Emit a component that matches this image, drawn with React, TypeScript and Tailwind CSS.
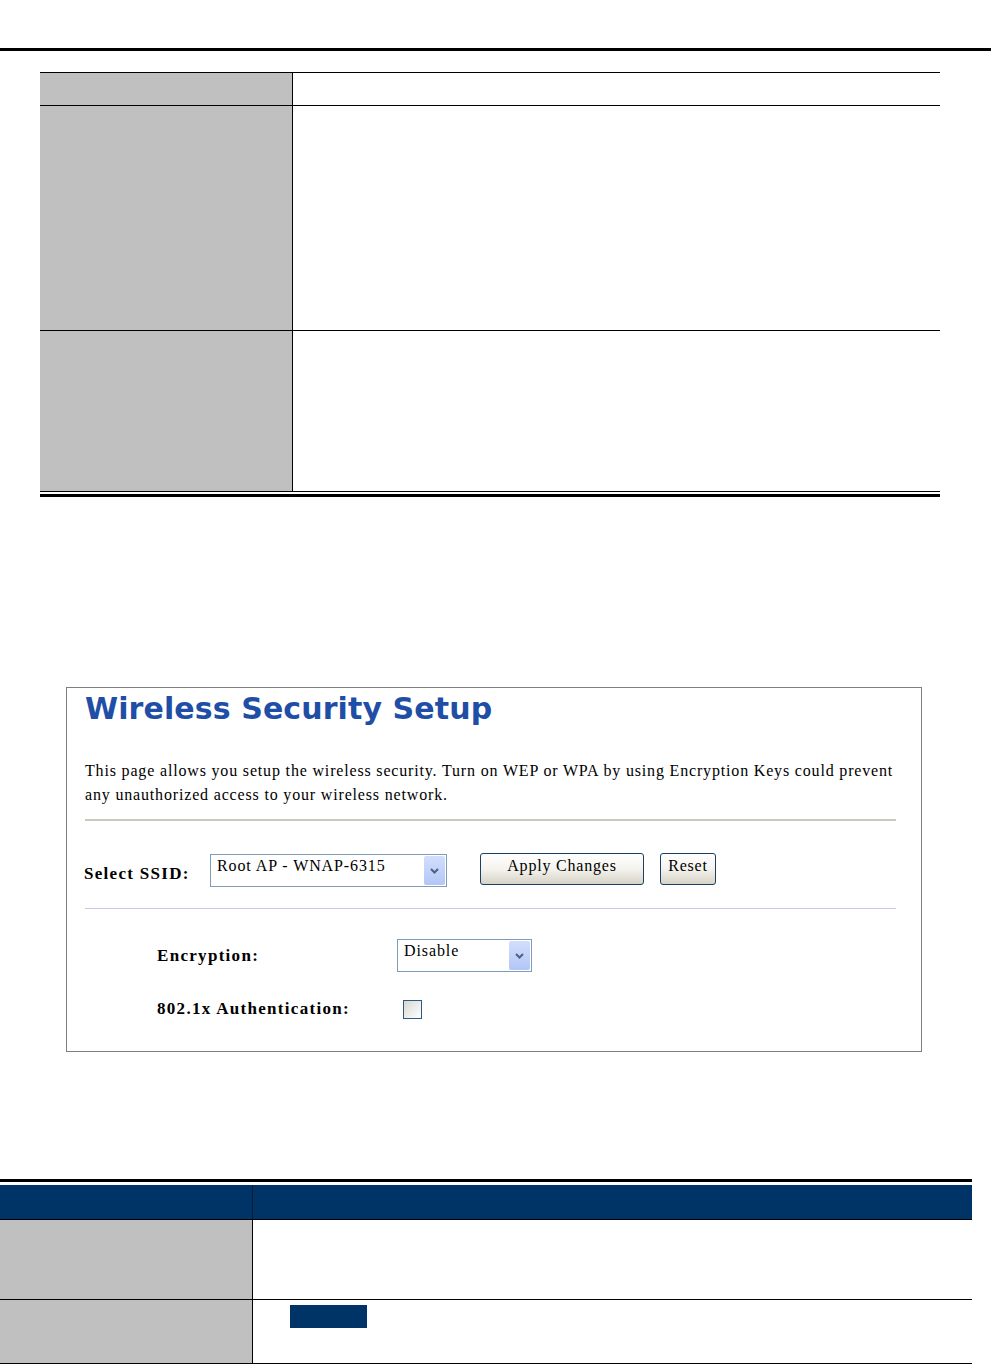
import React from 'react';

const serif = { fontFamily: '"Liberation Serif", "Times New Roman", serif' };

// grey label column + white description column, used by both manual tables
const Row: React.FC<{ h: string; w: string; line?: boolean }> = ({ h, w, line = true }) => (
  <div className={`flex ${h}`}>
    <div className={`${w} shrink-0 bg-[#c0c0c0]`} />
    {line && <div className="w-px bg-black" />}
    <div className="flex-1 bg-white" />
  </div>
);

const SelectArrow: React.FC = () => (
  <div className="w-[21px] self-stretch m-px rounded-[2px] bg-gradient-to-b from-[#d3defc] to-[#b2c6f6] flex items-center justify-center">
    <svg width="9" height="6" viewBox="0 0 9 6">
      <path d="M1 1 L4.5 4.5 L8 1" fill="none" stroke="#4d6185" strokeWidth="2" />
    </svg>
  </div>
);

const Select: React.FC<{ value: string; w: string }> = ({ value, w }) => (
  <div className={`${w} h-[33px] border border-[#7f9db9] bg-white flex`}>
    <span className="flex-1 pl-[6px] pt-px text-[16px] leading-[20px] tracking-[0.9px] text-black whitespace-nowrap">
      {value}
    </span>
    <SelectArrow />
  </div>
);

const XpButton: React.FC<{ label: string; w: string }> = ({ label, w }) => (
  <div
    className={`${w} h-[32px] rounded-[3px] border border-[#1c3f64] bg-gradient-to-b from-white via-[#f4f3ee] to-[#d6d3c6] flex justify-center pt-[2px] text-[16px] leading-[20px] tracking-[0.8px] text-black`}
  >
    {label}
  </div>
);

const labelCls = 'text-[17px] leading-[20px] font-bold tracking-[1.3px] text-black whitespace-nowrap';

const WirelessSecurityPanel: React.FC = () => (
  <div className="ml-[66px] w-[856px] h-[365px] border border-[#7f7f7f] bg-white">
    <div className="pl-[18px] pr-[25px]">
      <h1
        className="mt-[6px] text-[30px] leading-[29px] font-bold tracking-[0.1px] text-[#1f4ea6] whitespace-nowrap"
        style={{ fontFamily: '"DejaVu Sans", Verdana, sans-serif' }}
      >
        Wireless Security Setup
      </h1>
      <div className="mt-[36px] text-[16px] leading-[24px] tracking-[0.83px] text-black" style={serif}>
        <p className="whitespace-nowrap">
          This page allows you setup the wireless security. Turn on WEP or WPA by using Encryption Keys could prevent
        </p>
        <p className="whitespace-nowrap">any unauthorized access to your wireless network.</p>
      </div>
      <div className="mt-[12px] h-[2px] bg-[#c9c9bd]" />

      <div className="mt-[33px] flex items-start" style={serif}>
        <span className={`mt-[10px] w-[126px] -ml-px ${labelCls}`}>Select SSID:</span>
        <Select value="Root AP - WNAP-6315" w="w-[237px]" />
        <div className="ml-[33px] -mt-px flex gap-[16px]">
          <XpButton label="Apply Changes" w="w-[164px]" />
          <XpButton label="Reset" w="w-[56px]" />
        </div>
      </div>
      <div className="mt-[21px] h-px bg-[#c8c8ee]" />

      <div className="mt-[30px] pl-[72px]" style={serif}>
        <div className="flex items-center">
          <span className={`w-[240px] ${labelCls}`}>Encryption:</span>
          <Select value="Disable" w="w-[135px]" />
        </div>
        <div className="mt-[27px] flex items-center">
          <span className={`w-[246px] ${labelCls}`}>802.1x Authentication:</span>
          <div className="w-[19px] h-[19px] border border-[#2b5a85] bg-gradient-to-br from-[#d8d8d2] to-white" />
        </div>
      </div>
    </div>
  </div>
);

export default function App() {
  return (
    <div className="w-[991px] h-[1365px] bg-white overflow-hidden" style={serif}>
      <div className="h-[48px]" />
      <div className="h-[3px] bg-black" />

      {/* upper description table */}
      <div className="mt-[21px] ml-[40px] w-[900px]">
        <div className="h-px bg-black" />
        <Row h="h-[32px]" w="w-[252px]" />
        <div className="h-px bg-black" />
        <Row h="h-[224px]" w="w-[252px]" />
        <div className="h-px bg-black" />
        <Row h="h-[160px]" w="w-[252px]" />
        <div className="h-px bg-black" />
        <div className="h-[2px]" />
        <div className="h-[3px] bg-black" />
      </div>

      <div className="h-[190px]" />
      <WirelessSecurityPanel />

      {/* lower description table */}
      <div className="mt-[127px] w-[972px]">
        <div className="h-[3px] bg-black" />
        <div className="h-[3px]" />
        <div className="flex h-[34px] bg-[#003366]">
          <div className="w-[252px]" />
          <div className="w-px bg-[#0a1a30]" />
          <div className="flex-1" />
        </div>
        <div className="h-px bg-black" />
        <Row h="h-[79px]" w="w-[252px]" />
        <div className="h-px bg-black" />
        <div className="flex h-[63px]">
          <div className="w-[252px] shrink-0 bg-[#c0c0c0]" />
          <div className="w-px bg-black" />
          <div className="flex-1 pl-[37px] pt-[5px]">
            <div className="w-[77px] h-[23px] bg-[#003366]" />
          </div>
        </div>
        <div className="h-px bg-black" />
      </div>
    </div>
  );
}
